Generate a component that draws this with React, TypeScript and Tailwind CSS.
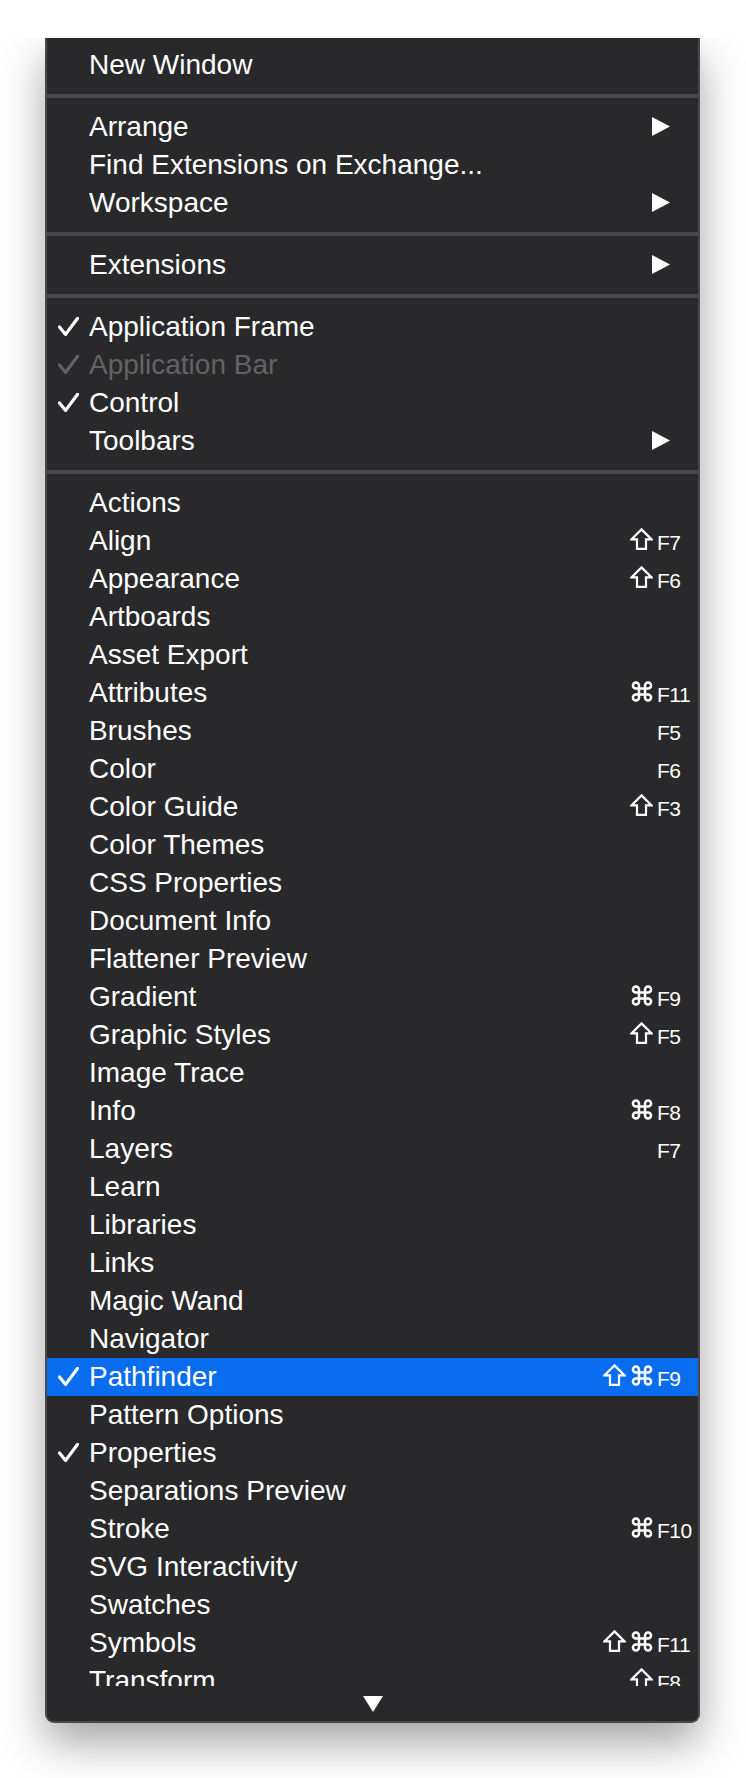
import React from "react";

type Mod = "shift" | "cmd";

interface Item {
  label: string;
  check?: boolean;
  disabled?: boolean;
  submenu?: boolean;
  mods?: Mod[];
  keyName?: string;
  active?: boolean;
}

const sections: Item[][] = [
  [{ label: "New Window" }],
  [
    { label: "Arrange", submenu: true },
    { label: "Find Extensions on Exchange..." },
    { label: "Workspace", submenu: true },
  ],
  [{ label: "Extensions", submenu: true }],
  [
    { label: "Application Frame", check: true },
    { label: "Application Bar", check: true, disabled: true },
    { label: "Control", check: true },
    { label: "Toolbars", submenu: true },
  ],
  [
    { label: "Actions" },
    { label: "Align", mods: ["shift"], keyName: "F7" },
    { label: "Appearance", mods: ["shift"], keyName: "F6" },
    { label: "Artboards" },
    { label: "Asset Export" },
    { label: "Attributes", mods: ["cmd"], keyName: "F11" },
    { label: "Brushes", keyName: "F5" },
    { label: "Color", keyName: "F6" },
    { label: "Color Guide", mods: ["shift"], keyName: "F3" },
    { label: "Color Themes" },
    { label: "CSS Properties" },
    { label: "Document Info" },
    { label: "Flattener Preview" },
    { label: "Gradient", mods: ["cmd"], keyName: "F9" },
    { label: "Graphic Styles", mods: ["shift"], keyName: "F5" },
    { label: "Image Trace" },
    { label: "Info", mods: ["cmd"], keyName: "F8" },
    { label: "Layers", keyName: "F7" },
    { label: "Learn" },
    { label: "Libraries" },
    { label: "Links" },
    { label: "Magic Wand" },
    { label: "Navigator" },
    { label: "Pathfinder", check: true, active: true, mods: ["shift", "cmd"], keyName: "F9" },
    { label: "Pattern Options" },
    { label: "Properties", check: true },
    { label: "Separations Preview" },
    { label: "Stroke", mods: ["cmd"], keyName: "F10" },
    { label: "SVG Interactivity" },
    { label: "Swatches" },
    { label: "Symbols", mods: ["shift", "cmd"], keyName: "F11" },
    { label: "Transform", mods: ["shift"], keyName: "F8" },
  ],
];

const CheckMark = ({ color }: { color: string }) => (
  <svg width="21" height="19" viewBox="0 0 21 19" className="block">
    <path
      d="M1.5 10 L7.6 17.4 L19.6 1.2"
      fill="none"
      stroke={color}
      strokeWidth="3.2"
      strokeLinecap="round"
      strokeLinejoin="round"
    />
  </svg>
);

const ShiftIcon = () => (
  <svg width="23" height="22" viewBox="0 0 23 22" className="block">
    <path
      d="M11.5 1.4 L21.6 11.4 H16 V20.8 H7 V11.4 H1.4 Z"
      fill="none"
      stroke="currentColor"
      strokeWidth="2.2"
      strokeLinejoin="miter"
    />
  </svg>
);

const CmdIcon = () => (
  <svg width="22" height="21" viewBox="1.6 1.6 20.8 20.8" className="block">
    <path
      d="M15 6v12a3 3 0 1 0 3-3H6a3 3 0 1 0 3 3V6a3 3 0 1 0-3 3h12a3 3 0 1 0-3-3"
      fill="none"
      stroke="currentColor"
      strokeWidth="2.5"
      strokeLinejoin="round"
    />
  </svg>
);

const SubArrow = () => (
  <svg width="18" height="19" viewBox="0 0 18 19" className="mr-[28px] block">
    <polygon points="0,0 18,9.5 0,19" fill="#ffffff" />
  </svg>
);

const MenuRow = ({ item }: { item: Item }) => {
  const textColor = item.disabled ? "text-[#636365]" : "text-white";
  return (
    <div
      className={`flex h-[38px] items-baseline ${textColor} ${
        item.active ? "bg-[#0a6cef]" : ""
      }`}
    >
      <div className="w-[42px] shrink-0 self-stretch flex items-end pb-[10px]">
        {item.check && (
          <div className="ml-[11px]">
            <CheckMark color={item.disabled ? "#636365" : "#ffffff"} />
          </div>
        )}
      </div>
      <span className="flex-1 whitespace-nowrap text-[28px] leading-[38px]">{item.label}</span>
      {item.submenu && <SubArrow />}
      {item.keyName && (
        <div className="flex items-baseline">
          <div className="flex items-baseline gap-[5px]">
            {item.mods?.map((m, i) => (m === "shift" ? <ShiftIcon key={i} /> : <CmdIcon key={i} />))}
          </div>
          <span className="ml-[4px] w-[41px] text-[21px] leading-none tracking-[-0.5px]">{item.keyName}</span>
        </div>
      )}
    </div>
  );
};

export default function App() {
  return (
    <div
      className="h-[1778px] w-[746px] overflow-hidden bg-white"
      style={{ fontFamily: '"Liberation Sans", Arial, sans-serif' }}
    >
      <div className="mt-[38px] h-[1740px] overflow-hidden pl-[45px]">
        <div className="w-[655px] rounded-b-[9px] border-x-2 border-b-2 border-[#48484a] bg-[#29292b] shadow-[0_20px_44px_rgba(0,0,0,0.36)]">
          <div className="h-[1648px] overflow-hidden pt-[8px]">
            {sections.map((section, si) => (
              <div key={si}>
                {si > 0 && <div className="my-[10px] h-[4px] bg-[#48484a]" />}
                {section.map((item) => (
                  <MenuRow key={item.label} item={item} />
                ))}
              </div>
            ))}
          </div>
          <div className="flex h-[35px] items-center justify-center">
            <svg width="20" height="16" viewBox="0 0 20 16" className="block">
              <polygon points="0,0 20,0 10,16" fill="#ffffff" />
            </svg>
          </div>
        </div>
      </div>
    </div>
  );
}
